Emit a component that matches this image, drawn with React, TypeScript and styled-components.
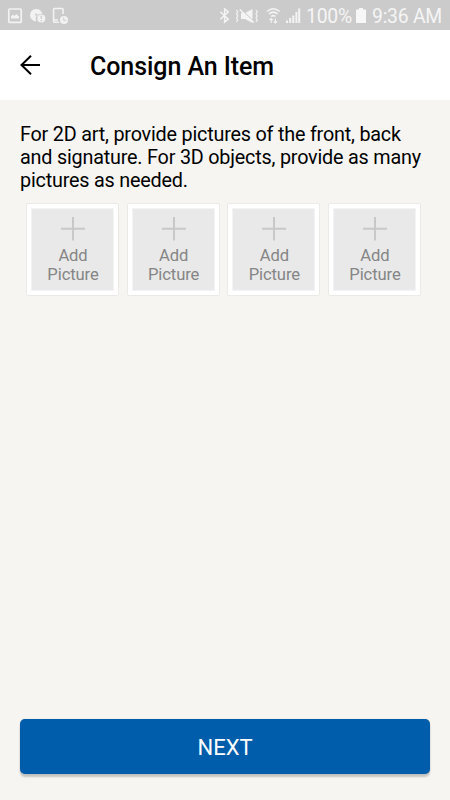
import React from "react";
import styled, { createGlobalStyle } from "styled-components";

const GlobalStyle = createGlobalStyle`
  * { box-sizing: border-box; }
  body { margin: 0; background: #f6f5f1; font-family: Roboto, sans-serif; }
`;

const Screen = styled.div`
  width: 450px;
  height: 800px;
  display: flex;
  flex-direction: column;
  background: #f6f5f1;
  overflow: hidden;
`;

const StatusBar = styled.div`
  height: 30px;
  flex: none;
  display: flex;
  align-items: center;
  justify-content: space-between;
  background: #cbcbcb;
  color: #f5f5f5;
`;

const StatusIcons = styled.svg`
  display: block;
  height: 30px;
  flex: none;
`;

const StatusGroup = styled.div`
  display: flex;
  align-items: center;
  height: 30px;
  padding-right: 8px;
`;

const StatusText = styled.span<{ $width: number }>`
  width: ${(p) => p.$width}px;
  height: 30px;
  font-size: 19.4px;
  line-height: 33px;
  letter-spacing: -0.25px;
  white-space: nowrap;
`;

const Header = styled.header`
  height: 70px;
  flex: none;
  display: flex;
  align-items: center;
  background: #fff;
`;

const BackButton = styled.button`
  width: 90px;
  height: 70px;
  padding: 0;
  border: 0;
  background: none;
`;

const Title = styled.h1`
  margin: 3px 0 0;
  font-size: 25px;
  line-height: 30px;
  font-weight: 500;
  letter-spacing: -0.07px;
  color: #000;
`;

const Content = styled.main`
  flex: 1;
  padding: 23px 20px 0;
`;

const Instructions = styled.p`
  margin: 0;
  font-size: 19.8px;
  line-height: 23.2px;
  letter-spacing: -0.2px;
  color: #000;
  white-space: nowrap;
`;

const Pictures = styled.div`
  display: flex;
  justify-content: space-between;
  padding: 0 9px 0 6px;
  margin-top: 10.4px;
`;

const PictureCard = styled.button`
  width: 93px;
  height: 93px;
  padding: 4px;
  border: 1px solid #ebeae7;
  border-radius: 2px;
  background: #fff;
  font-family: inherit;
`;

const CardBody = styled.span`
  height: 83px;
  display: flex;
  flex-direction: column;
  align-items: center;
  padding: 8px 0 0 1px;
  border: 1px solid #f4f4f4;
  background: #e9e9e9;
  color: #858585;
  font-size: 16.6px;
  line-height: 19px;
  letter-spacing: -0.1px;
`;

const PlusIcon = styled.svg`
  display: block;
  margin-bottom: 5px;
`;

const Footer = styled.footer`
  padding: 0 20px 26px;
`;

const NextButton = styled.button`
  width: 100%;
  height: 55px;
  display: block;
  border: 0;
  border-radius: 5px;
  background: #005dab;
  box-shadow: 0 3px 2px rgba(0, 0, 0, 0.2), 0 0 1px rgba(0, 0, 0, 0.25);
  color: #fff;
  font: 400 22px/57px Roboto, sans-serif;
  padding: 0;
`;

const AddPicture = () => (
  <PictureCard>
    <CardBody>
      <PlusIcon width="24" height="24" viewBox="0 0 24 24" stroke="#c8c8c8" strokeWidth="2">
        <path d="M12 0v23.5M0 11.7h24" />
      </PlusIcon>
      <span>Add</span>
      <span>Picture</span>
    </CardBody>
  </PictureCard>
);

export default function App() {
  return (
    <>
      <GlobalStyle />
      <Screen>
        <StatusBar>
          <StatusIcons width="80" viewBox="0 0 80 30" fill="none" stroke="#f2f2f2">
            <rect x="8.8" y="9" width="12.4" height="13.4" rx="1" strokeWidth="1.7" />
            <path d="M11 18.5v-2l2-2 1.5 1.5 1.8-2 2.7 2.5v2z" fill="#f2f2f2" stroke="none" />
            <path d="M42.3 14A6.2 6.2 0 1 0 36.5 21.3 5 5 0 0 1 42.3 14z" fill="#f2f2f2" stroke="none" />
            <circle cx="36.2" cy="14.7" r="1.1" fill="#cbcbcb" stroke="none" />
            <circle cx="41.3" cy="18.4" r="4" fill="#f2f2f2" stroke="none" />
            <path d="M41.3 15.8v3M41.3 20v1.2" stroke="#cbcbcb" strokeWidth="1.3" />
            <path d="M63 14V9.3q0-.8-.8-.8h-7.8q-.8 0-.8.8v12.2q0 .8.8.8H59M54 20h4" strokeWidth="1.6" />
            <circle cx="64" cy="20" r="4" fill="#f2f2f2" stroke="none" />
            <path d="M63.7 17.5v2.8h2.5" stroke="#cbcbcb" />
          </StatusIcons>
          <StatusGroup>
            <StatusIcons width="89" viewBox="217 0 89 30" fill="none" stroke="#f4f4f4">
              <path d="M220.3 11.8l8 7.4-3.7 3V9l3.7 2.8-8 7.4" strokeWidth="1.5" />
              <path d="M236.5 10l1.3 2-1.3 2 1.3 2-1.3 2 1.3 2-1.3 2M256 10l1.3 2-1.3 2 1.3 2-1.3 2 1.3 2-1.3 2" strokeWidth="1.2" />
              <path d="M241 13h4l7.5-4v14l-7.5-4h-4z" fill="#f4f4f4" stroke="none" />
              <path d="M241 9.3l13.5 13" stroke="#cbcbcb" strokeWidth="1.2" />
              <path d="M239.8 9.5l14 13" strokeWidth="1.4" />
              <path d="M267 11.5q6.3-5.5 12.6 0M269 14q4.3-3.8 8.6 0M271.2 16.5q2.1-1.8 4.2 0" strokeWidth="1.5" />
              <path d="M271.2 23v-4.5M269.5 20.2l1.7-1.7 1.7 1.7M275.4 18.5V23M273.7 21.3l1.7 1.7 1.7-1.7" strokeWidth="1.1" />
              <path d="M287 20.5V23M290.2 18v5M293.3 15.5V23M296.4 12v11M299.2 8.5V23" strokeWidth="2" />
            </StatusIcons>
            <StatusText $width={49}>100%</StatusText>
            <StatusIcons width="17" viewBox="0 0 17 30">
              <path d="M4 8h4v1.5h3V23H1V9.5h3z" fill="#f7f7f7" />
            </StatusIcons>
            <StatusText $width={70}>9:36 AM</StatusText>
          </StatusGroup>
        </StatusBar>
        <Header>
          <BackButton aria-label="Back">
            <svg width="90" height="70" viewBox="0 0 90 70" fill="none" stroke="#000" strokeWidth="2">
              <path d="M40 35H21.5M31 25.7L21.5 35l9.5 9.3" />
            </svg>
          </BackButton>
          <Title>Consign An Item</Title>
        </Header>
        <Content>
          <Instructions>
            For 2D art, provide pictures of the front, back<br />
            and signature. For 3D objects, provide as many<br />
            pictures as needed.
          </Instructions>
          <Pictures>
            {[0, 1, 2, 3].map((slot) => <AddPicture key={slot} />)}
          </Pictures>
        </Content>
        <Footer><NextButton>NEXT</NextButton></Footer>
      </Screen>
    </>
  );
}
